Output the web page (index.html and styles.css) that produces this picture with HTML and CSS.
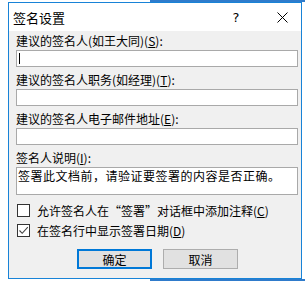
FILE: index.html
```html
<!DOCTYPE html>
<html lang="zh-CN">
<head>
    <meta charset="UTF-8">
    <title>签名设置</title>
    <link rel="stylesheet" href="styles.css">
</head>
<body>
    <div class="backdrop"></div>
    <div class="frame">
        <div class="dialog">
            <div class="titlebar">
                <span class="title">签名设置</span>
                <span class="help">?</span>
                <span class="close">
                    <svg width="11" height="11" viewBox="0 0 11 11"><path d="M0.5 0.5L10.5 10.5M10.5 0.5L0.5 10.5" stroke="#000" stroke-width="1" fill="none"/></svg>
                </span>
            </div>
            <div class="content">
                <div class="field">
                    <div class="label">建议的签名人(如王大同)(<u>S</u>):</div>
                    <div class="box"><span class="caret"></span></div>
                </div>
                <div class="field">
                    <div class="label">建议的签名人职务(如经理)(<u>T</u>):</div>
                    <div class="box"></div>
                </div>
                <div class="field">
                    <div class="label">建议的签名人电子邮件地址(<u>E</u>):</div>
                    <div class="box"></div>
                </div>
                <div class="field note">
                    <div class="label">签名人说明(<u>I</u>):</div>
                    <div class="box area">签署此文档前，请验证要签署的内容是否正确。</div>
                </div>
                <div class="checks">
                    <div class="check"><span class="cb"></span>允许签名人在“签署”对话框中添加注释(<u>C</u>)</div>
                    <div class="check"><span class="cb"><svg width="11" height="11" viewBox="0 0 11 11"><path d="M1.5 5.5L4.2 8.3L9.8 2.2" stroke="#444" stroke-width="1.1" fill="none"/></svg></span>在签名行中显示签署日期(<u>D</u>)</div>
                </div>
                <div class="buttons">
                    <button class="btn default">确定</button>
                    <button class="btn">取消</button>
                </div>
            </div>
        </div>
    </div>
</body>
</html>
```

FILE: styles.css
```css
* {
    margin: 0;
    padding: 0;
    box-sizing: border-box;
}

body {
    font-family: "Noto Sans CJK SC", "Noto Sans", sans-serif;
    font-size: 12px;
    color: #000;
    background: #fff;
    width: 305px;
    height: 281px;
    overflow: hidden;
    position: relative;
}

/* window behind the dialog */
.backdrop {
    position: absolute;
    left: 150px;
    top: 0;
    right: 0;
    bottom: 0;
    background: #2f7bcb;
}

.frame {
    position: relative;
    margin-top: 2px;
    height: 277px;
    padding-left: 8px;
    background: #fff;
}

.dialog {
    width: 294px;
    height: 277px;
    border: 1px solid #1883d7;
    background: #f0f0f0;
    display: flex;
    flex-direction: column;
}

.titlebar {
    height: 28px;
    background: #fff;
    display: flex;
    align-items: center;
    padding-left: 4px;
}

.title {
    font-size: 13px;
    flex: 1;
}

.help {
    font-family: "DejaVu Sans", sans-serif;
    font-size: 13px;
    width: 54px;
    text-align: center;
}

.close {
    width: 38px;
    display: flex;
    justify-content: center;
}

.content {
    padding: 2px 3px 0 7px;
}

.label {
    line-height: 16px;
    height: 16px;
}

.field {
    margin-bottom: 5px;
}

.box {
    margin-top: 1px;
    height: 17px;
    background: #fff;
    border: 1px solid #a9a9a9;
}

.caret {
    display: block;
    margin: 2px 0 0 2px;
    width: 1px;
    height: 11px;
    background: #000;
}

.area {
    height: 28px;
    line-height: 16px;
    padding-left: 1px;
    letter-spacing: 0.5px;
}

.checks {
    margin-top: 1px;
}

.check {
    display: flex;
    align-items: center;
    height: 20px;
    padding-left: 1px;
}

.cb {
    width: 13px;
    height: 13px;
    border: 1px solid #333;
    background: #fff;
    margin-right: 7px;
    display: flex;
    align-items: center;
    justify-content: center;
}

.buttons {
    display: flex;
    gap: 11px;
    padding-left: 61px;
    margin-top: 9px;
}

.btn {
    width: 75px;
    height: 20px;
    font-family: inherit;
    font-size: 12px;
    background: #e1e1e1;
    border: 1px solid #adadad;
    color: #000;
}

.btn.default {
    border: 2px solid #0078d7;
}
```
